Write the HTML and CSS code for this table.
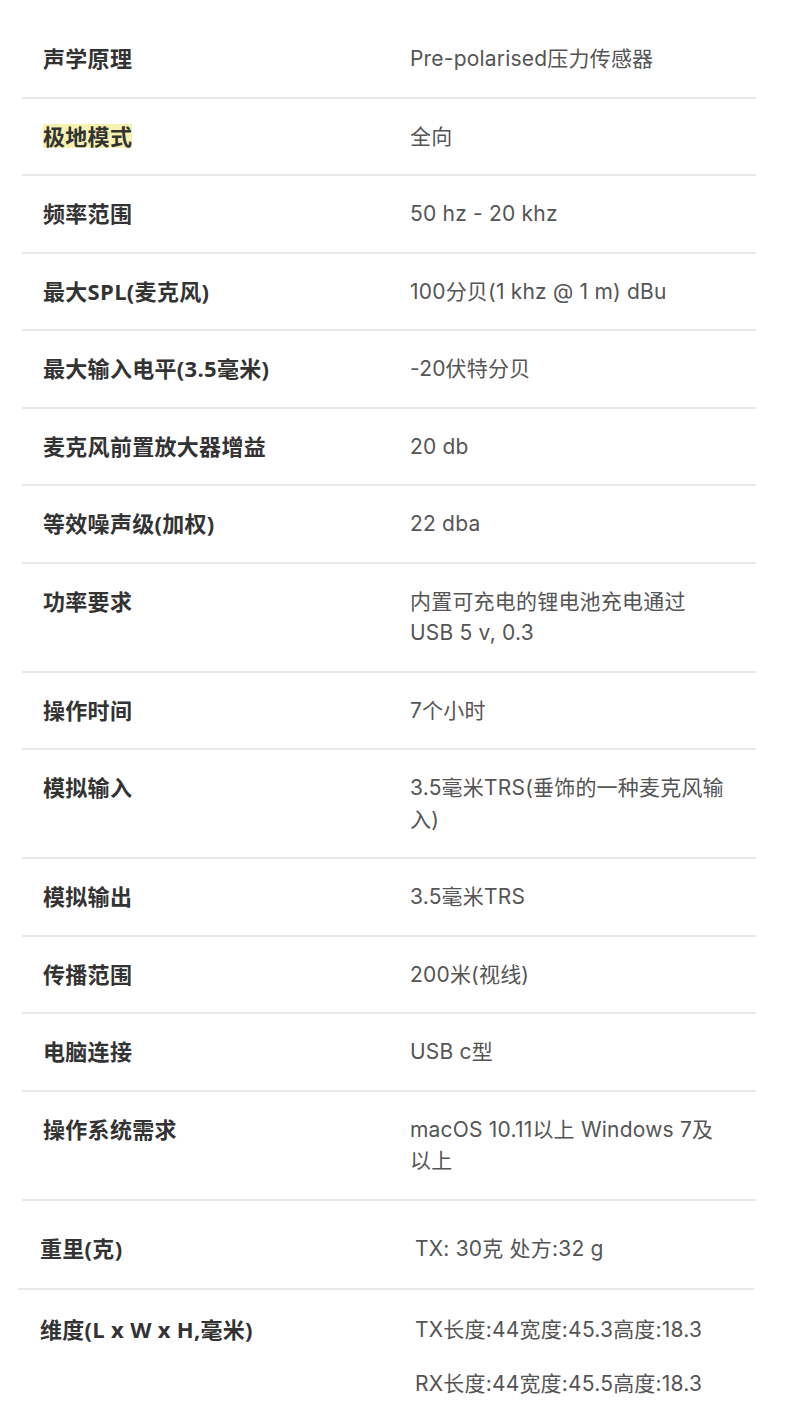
FILE: index.html
```html
<!DOCTYPE html>
<html lang="zh-CN">
<head>
<meta charset="utf-8">
<title>规格</title>
<link rel="stylesheet" href="styles.css">
</head>
<body>
<div class="wrap">
  <div class="specs">
    <div class="row"><div class="k">声学原理</div><div class="v">Pre-polarised压力传感器</div></div>
    <div class="row"><div class="k"><span class="mark">极地模式</span></div><div class="v">全向</div></div>
    <div class="row"><div class="k">频率范围</div><div class="v">50 hz - 20 khz</div></div>
    <div class="row"><div class="k">最大SPL(麦克风)</div><div class="v">100分贝(1 khz @ 1 m) dBu</div></div>
    <div class="row"><div class="k">最大输入电平(3.5毫米)</div><div class="v">-20伏特分贝</div></div>
    <div class="row"><div class="k">麦克风前置放大器增益</div><div class="v">20 db</div></div>
    <div class="row"><div class="k">等效噪声级(加权)</div><div class="v">22 dba</div></div>
    <div class="row"><div class="k">功率要求</div><div class="v">内置可充电的锂电池充电通过<br>USB 5 v, 0.3</div></div>
    <div class="row"><div class="k">操作时间</div><div class="v">7个小时</div></div>
    <div class="row"><div class="k">模拟输入</div><div class="v">3.5毫米TRS(垂饰的一种麦克风输入)</div></div>
    <div class="row"><div class="k">模拟输出</div><div class="v">3.5毫米TRS</div></div>
    <div class="row"><div class="k">传播范围</div><div class="v">200米(视线)</div></div>
    <div class="row"><div class="k">电脑连接</div><div class="v">USB c型</div></div>
    <div class="row"><div class="k">操作系统需求</div><div class="v">macOS 10.11以上 Windows 7及以上</div></div>
  </div>
  <div class="specs specs-b">
    <div class="row row-w"><div class="k">重里(克)</div><div class="v">TX: 30克 处方:32 g</div></div>
    <div class="row row-d"><div class="k">维度(L x W x H,毫米)</div><div class="v"><p>TX长度:44宽度:45.3高度:18.3</p><p>RX长度:44宽度:45.5高度:18.3</p></div></div>
  </div>
</div>
</body>
</html>
```

FILE: styles.css
```css
html, body {
  margin: 0;
  padding: 0;
  background: #ffffff;
}

.wrap {
  padding: 21px 34px 0 22px;
}

.row {
  display: grid;
  grid-template-columns: 1fr 1fr;
  border-bottom: 2px solid #e8e8e8;
}

.k, .v {
  padding: 22px 21px;
  line-height: 31.5px;
}

.k {
  font-family: "Open Sans", "Noto Sans CJK SC", sans-serif;
  font-weight: 700;
  font-size: 22px;
  letter-spacing: 0.3px;
  color: #333333;
}

.v {
  font-family: Inter, "Noto Sans CJK SC", sans-serif;
  font-size: 21px;
  letter-spacing: 0.2px;
  color: #555555;
  padding-right: 26px;
}

.mark {
  display: inline-block;
  background: #f6f2b0;
  line-height: 24px;
  vertical-align: baseline;
}

.specs-b {
  margin-left: -4px;
  margin-right: 2px;
}

.specs-b .row {
  grid-template-columns: 376px 1fr;
}

.specs-b .k {
  padding-left: 22px;
}

.row-w .k, .row-w .v {
  padding-top: 32px;
  padding-bottom: 24px;
}

.row-d {
  border-bottom: none;
}

.row-d .k, .row-d .v {
  padding-top: 24px;
}

.v p {
  margin: 0 0 22.5px 0;
}
```
